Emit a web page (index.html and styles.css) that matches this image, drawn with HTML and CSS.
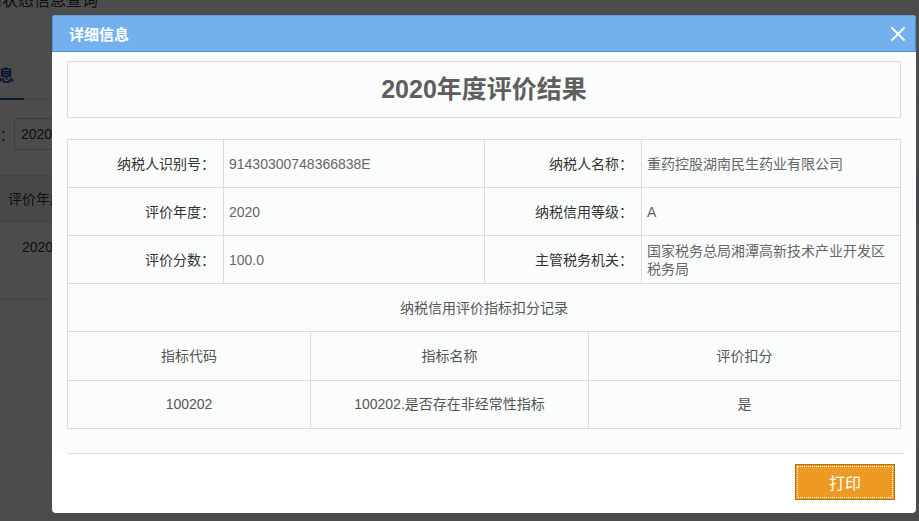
FILE: index.html
```html
<!DOCTYPE html>
<html lang="zh-CN">
<head>
    <meta charset="UTF-8">
    <title>详细信息</title>
    <link rel="stylesheet" href="styles.css">
</head>
<body>

<!--底下的查询页面-->
<div class="page">
    <div class="page-title">纳税人信用状态信息查询</div>
    <div class="page-tabs">
        <span class="page-tab current">基本信息</span>
    </div>
    <div class="page-form">
        <label>评价年度：</label>
        <span class="page-input">2020</span>
    </div>
    <div class="page-table">
        <div class="page-table-head">评价年度</div>
        <div class="page-table-row">2020</div>
    </div>
</div>

<!--遮罩-->
<div class="mask"></div>

<!--弹窗-->
<div class="dialog">
    <div class="dialog-head">
        <span class="dialog-title">详细信息</span>
        <span class="dialog-close">
            <svg width="16" height="16" viewBox="0 0 16 16">
                <path d="M1.5 1.5 L14.5 14.5 M14.5 1.5 L1.5 14.5" stroke="#fff" stroke-width="2" fill="none"/>
            </svg>
        </span>
    </div>

    <div class="dialog-body">
        <div class="result-title">2020年度评价结果</div>

        <table class="info-table">
            <colgroup>
                <col class="c-label">
                <col class="c-value">
                <col class="c-label2">
                <col>
            </colgroup>
            <tr>
                <td class="label">纳税人识别号：</td>
                <td class="value">91430300748366838E</td>
                <td class="label">纳税人名称：</td>
                <td class="value">重药控股湖南民生药业有限公司</td>
            </tr>
            <tr>
                <td class="label">评价年度：</td>
                <td class="value">2020</td>
                <td class="label">纳税信用等级：</td>
                <td class="value">A</td>
            </tr>
            <tr>
                <td class="label">评价分数：</td>
                <td class="value">100.0</td>
                <td class="label">主管税务机关：</td>
                <td class="value">国家税务总局湘潭高新技术产业开发区税务局</td>
            </tr>
            <tr>
                <td class="caption" colspan="4">纳税信用评价指标扣分记录</td>
            </tr>
        </table>

        <table class="score-table">
            <colgroup>
                <col class="c-code">
                <col class="c-name">
                <col>
            </colgroup>
            <tr>
                <td>指标代码</td>
                <td>指标名称</td>
                <td>评价扣分</td>
            </tr>
            <tr>
                <td>100202</td>
                <td>100202.是否存在非经常性指标</td>
                <td>是</td>
            </tr>
        </table>
    </div>

    <div class="dialog-foot">
        <button class="btn-print">打印</button>
    </div>
</div>

</body>
</html>
```

FILE: styles.css
```css
* {
    margin: 0;
    padding: 0;
    box-sizing: border-box;
}

body {
    width: 919px;
    height: 521px;
    overflow: hidden;
    position: relative;
    background-color: #fff;
    font-family: "Liberation Sans", "Noto Sans CJK SC", sans-serif;
    font-size: 14px;
    color: #333;
}

/*底下的页面*/
.page {
    margin-left: -100px;
}

.page-title {
    height: 20px;
    margin-top: -13px;
    padding-left: 22px;
    font-size: 16px;
    color: #333;
}

.page-tabs {
    height: 46px;
    margin-top: 47px;
    border-bottom: 1px solid #ddd;
}

.page-tab {
    display: inline-block;
    height: 46px;
    padding: 8px 0 0 50px;
    font-size: 16px;
    color: #1e4f9c;
    font-weight: bold;
    border-bottom: 2px solid #1e4f9c;
    width: 124px;
}

.page-form {
    display: flex;
    align-items: center;
    height: 32px;
    margin-top: 18px;
    padding-left: 44px;
}

.page-input {
    display: inline-block;
    width: 120px;
    height: 32px;
    line-height: 30px;
    padding-left: 6px;
    border: 1px solid #ccc;
    border-radius: 2px;
}

.page-table {
    margin-top: 25px;
    border-top: 1px solid #ddd;
}

.page-table-head {
    height: 46px;
    line-height: 46px;
    padding-left: 108px;
    background-color: #eef2f7;
    border-bottom: 1px solid #ddd;
}

.page-table-row {
    height: 78px;
    line-height: 50px;
    padding-left: 122px;
    border-bottom: 1px solid #ddd;
}

/*遮罩*/
.mask {
    position: absolute;
    left: 0;
    top: 0;
    width: 100%;
    height: 100%;
    background-color: rgba(0, 0, 0, 0.7);
}

/*弹窗*/
.dialog {
    position: absolute;
    left: 52px;
    top: 15px;
    width: 864px;
    height: 498px;
    background-color: #fff;
    border-radius: 4px;
    overflow: hidden;
    display: flex;
    flex-direction: column;
}

.dialog-head {
    height: 37px;
    flex-shrink: 0;
    display: flex;
    align-items: center;
    justify-content: space-between;
    padding: 0 9px 0 16px;
    background-color: #74b0ed;
    border: 1px solid #4a90d6;
    border-top-color: #5c9ee0;
    border-radius: 4px 4px 0 0;
}

.dialog-title {
    color: #fff;
    font-size: 15px;
    font-weight: bold;
}

.dialog-close {
    display: flex;
    cursor: pointer;
}

.dialog-body {
    flex: 1;
    padding: 9px 15px 0 15px;
    background-color: #fbfdfd;
}

.result-title {
    height: 57px;
    line-height: 55px;
    text-align: center;
    font-size: 25px;
    font-weight: bold;
    color: #5e5e5e;
    border: 1px solid #dcdcdc;
}

.info-table,
.score-table {
    width: 834px;
    border-collapse: collapse;
    table-layout: fixed;
}

.info-table {
    margin-top: 21px;
}

.info-table td,
.score-table td {
    height: 48px;
    border: 1px solid #dcdcdc;
    line-height: 18px;
}

.c-label {
    width: 156px;
}

.c-value {
    width: 261px;
}

.c-label2 {
    width: 157px;
}

.info-table .label {
    text-align: right;
    padding-right: 8px;
    color: #333;
}

.info-table .value {
    padding-left: 5px;
    padding-right: 10px;
    color: #666;
}

.info-table .caption {
    text-align: center;
    color: #555;
}

.score-table td {
    border-top: none;
    text-align: center;
    color: #555;
}

.score-table tr + tr td {
    border-top: 1px solid #dcdcdc;
}

.c-code {
    width: 243px;
}

.c-name {
    width: 278px;
}

/*底部按钮*/
.dialog-foot {
    height: 60px;
    flex-shrink: 0;
    margin: 0 12px 0 15px;
    border-top: 1px solid #dcdcdc;
    display: flex;
    justify-content: flex-end;
    align-items: flex-start;
    padding: 10px 9px 0 0;
}

.btn-print {
    width: 100px;
    height: 36px;
    background-color: #ec9a24;
    border: 1px solid #b8720e;
    outline: 1px dotted #fff;
    outline-offset: -3px;
    color: #fff;
    font-size: 16px;
    font-family: "Liberation Sans", "Noto Sans CJK SC", sans-serif;
    cursor: pointer;
}
```
